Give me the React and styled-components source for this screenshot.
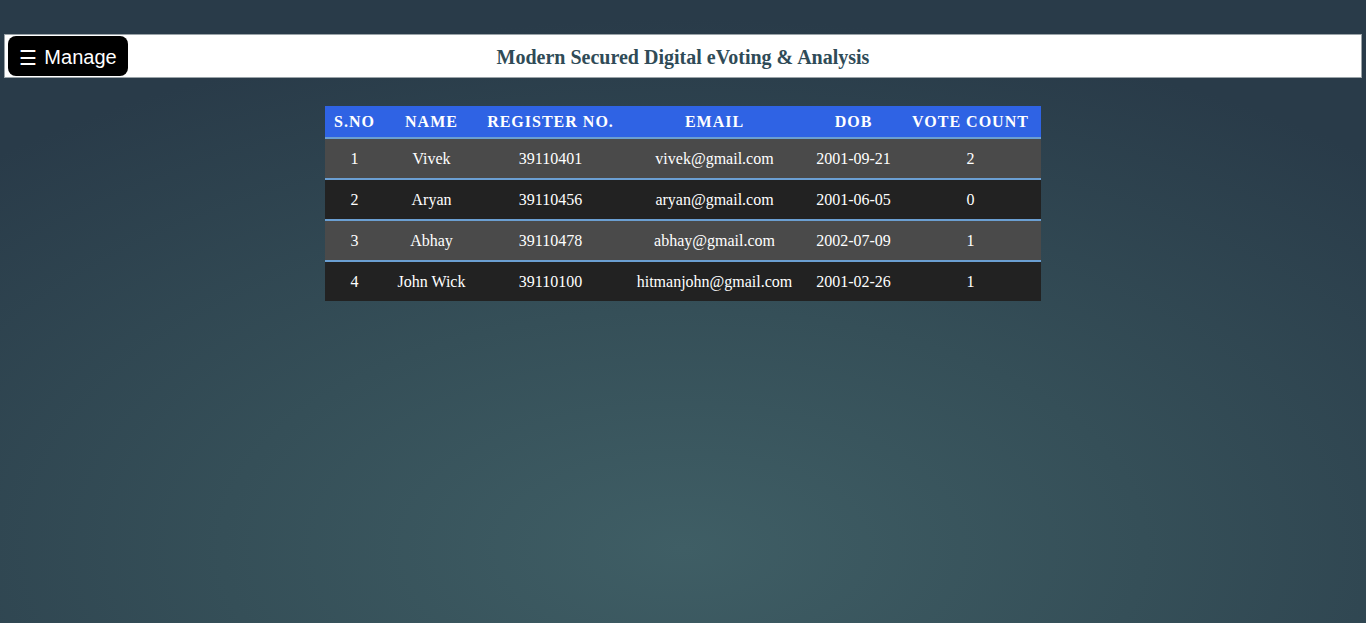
import React from 'react';
import styled, { createGlobalStyle } from 'styled-components';

const GlobalStyle = createGlobalStyle`
  html, body {
    margin: 0;
    padding: 0;
  }
  body {
    height: 623px;
    overflow: hidden;
    background: radial-gradient(ellipse 75% 85% at 50% 88%, #3f5e65 0%, #354f58 45%, #293b49 100%);
    font-family: "Liberation Serif", "Times New Roman", serif;
  }
`;

const Page = styled.div`
  padding-top: 34px;
`;

const TopBar = styled.header`
  margin: 0 4px;
  height: 42px;
  background: #fff;
  border: 1px solid #9aa3a8;
  display: flex;
  align-items: center;
  position: relative;
`;

const MenuButton = styled.button`
  position: absolute;
  left: 3px;
  top: 1px;
  height: 40px;
  width: 120px;
  border: none;
  border-radius: 8px;
  background: #000;
  color: #fff;
  font-family: "Liberation Sans", Arial, sans-serif;
  font-size: 20px;
  padding: 3px 0 0 0;
  display: flex;
  align-items: center;
  justify-content: center;
  gap: 7px;
  cursor: pointer;
`;

const Title = styled.h1`
  flex: 1;
  margin: 2px 0 0;
  text-align: center;
  font-family: "Liberation Serif", "Times New Roman", serif;
  font-size: 20px;
  font-weight: bold;
  color: #2f4b57;
`;

const TableWrap = styled.div`
  display: flex;
  justify-content: center;
  padding-top: 28px;
`;

const Table = styled.table`
  border-collapse: collapse;
  table-layout: fixed;
  width: 716px;
  margin-left: -1px;
`;

const HeadCell = styled.th`
  background: #2f63e4;
  color: #fff;
  font-size: 16px;
  font-weight: bold;
  letter-spacing: 1px;
  height: 31px;
  padding: 0;
  text-align: center;
  border-bottom: 2px solid #6b9fd2;
`;

const Row = styled.tr`
  background: ${(p) => (p.$odd ? '#4a4a4a' : '#222222')};
  &:not(:first-child) > td {
    border-top: 2px solid #6b9fd2;
  }
`;

const Cell = styled.td`
  color: #fff;
  font-size: 16px;
  height: 39px;
  padding: 0;
  text-align: center;
`;

const columns = [
  { label: 'S.NO', width: 60 },
  { label: 'NAME', width: 94 },
  { label: 'REGISTER NO.', width: 144 },
  { label: 'EMAIL', width: 184 },
  { label: 'DOB', width: 94 },
  { label: 'VOTE COUNT', width: 140 },
];

const voters = [
  ['1', 'Vivek', '39110401', 'vivek@gmail.com', '2001-09-21', '2'],
  ['2', 'Aryan', '39110456', 'aryan@gmail.com', '2001-06-05', '0'],
  ['3', 'Abhay', '39110478', 'abhay@gmail.com', '2002-07-09', '1'],
  ['4', 'John Wick', '39110100', 'hitmanjohn@gmail.com', '2001-02-26', '1'],
];

export default function App() {
  return (
    <>
      <GlobalStyle />
      <Page>
        <TopBar>
          <MenuButton type="button">
            <span>☰</span>
            <span>Manage</span>
          </MenuButton>
          <Title>Modern Secured Digital eVoting &amp; Analysis</Title>
        </TopBar>
        <TableWrap>
          <Table>
            <colgroup>
              {columns.map((c) => (
                <col key={c.label} style={{ width: c.width }} />
              ))}
            </colgroup>
            <thead>
              <tr>
                {columns.map((c) => (
                  <HeadCell key={c.label}>{c.label}</HeadCell>
                ))}
              </tr>
            </thead>
            <tbody>
              {voters.map((v, i) => (
                <Row key={v[0]} $odd={i % 2 === 0}>
                  {v.map((val, j) => (
                    <Cell key={j}>{val}</Cell>
                  ))}
                </Row>
              ))}
            </tbody>
          </Table>
        </TableWrap>
      </Page>
    </>
  );
}
